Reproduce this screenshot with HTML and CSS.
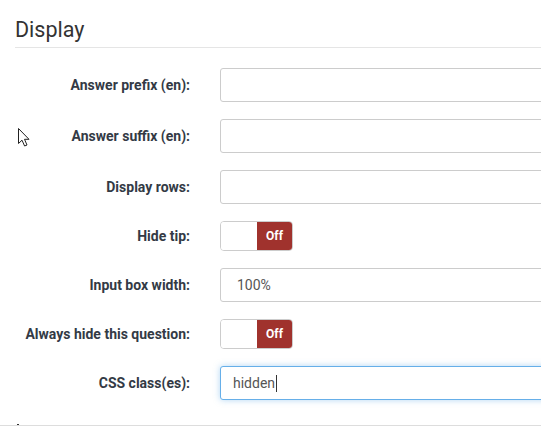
FILE: index.html
```html
<!DOCTYPE html>
<html>
<head>
<meta charset="utf-8">
<link rel="stylesheet" href="styles.css">
</head>
<body>
<div class="panel">
  <h3 class="section-title">Display</h3>
  <div class="form">
    <div class="row">
      <label class="label">Answer prefix (en):</label>
      <div class="field"><input class="input" type="text" value=""></div>
    </div>
    <div class="row">
      <label class="label">Answer suffix (en):</label>
      <div class="field"><input class="input" type="text" value=""></div>
    </div>
    <div class="row">
      <label class="label">Display rows:</label>
      <div class="field"><input class="input" type="text" value=""></div>
    </div>
    <div class="row row-toggle">
      <label class="label">Hide tip:</label>
      <div class="field"><div class="toggle"><span class="toggle-on"></span><span class="toggle-off">Off</span></div></div>
    </div>
    <div class="row">
      <label class="label">Input box width:</label>
      <div class="field"><div class="input input-wide"><span class="value">100%</span></div></div>
    </div>
    <div class="row row-toggle">
      <label class="label">Always hide this question:</label>
      <div class="field"><div class="toggle"><span class="toggle-on"></span><span class="toggle-off">Off</span></div></div>
    </div>
    <div class="row">
      <label class="label">CSS class(es):</label>
      <div class="field"><div class="input focused"><span class="value">hidden</span><span class="caret"></span></div></div>
    </div>
  </div>
  <div class="next-section"><span class="mark"></span></div>
</div>
<svg class="pointer" width="14" height="22" viewBox="0 0 14 22">
  <path d="M1.5 1.5 L1.5 16.5 L5 13.2 L7.6 19 L10 18 L7.5 12.3 L12 12.3 Z" fill="#fff" stroke="#222" stroke-width="1" stroke-linejoin="round"/>
</svg>
</body>
</html>
```
FILE: styles.css
```css
html, body {
  margin: 0;
  padding: 0;
  background: #fff;
  overflow: hidden;
}
body {
  width: 541px;
  height: 426px;
  font-family: Roboto, "Liberation Sans", sans-serif;
  color: #333;
  position: relative;
}
.panel {
  padding-left: 15px;
  margin-right: -30px;
}
.section-title {
  margin: 0;
  padding-top: 18px;
  padding-bottom: 5px;
  font-size: 21.5px;
  font-weight: 400;
  line-height: 24px;
  color: #333;
  border-bottom: 1px solid #e5e5e5;
}
.form {
  padding-top: 20px;
  display: flex;
  flex-direction: column;
  gap: 17px;
}
.row {
  display: grid;
  grid-template-columns: 175px 1fr;
  column-gap: 30px;
  align-items: center;
}
.label {
  text-align: right;
  font-weight: 700;
  font-size: 14px;
  color: #333a45;
}
.field {
  display: flex;
}
.input {
  box-sizing: border-box;
  width: 100%;
  height: 34px;
  border: 1px solid #ccc;
  border-radius: 3px;
  background: #fff;
  padding: 0 12px;
  font-family: Roboto, "Liberation Sans", sans-serif;
  font-size: 14px;
  color: #555;
  display: flex;
  align-items: center;
  outline: none;
}
.input-wide {
  padding-left: 16px;
}
.focused {
  border-color: #66afe9;
  box-shadow: 0 0 6px rgba(102, 175, 233, 0.5);
}
.caret {
  display: inline-block;
  width: 1px;
  height: 17px;
  background: #333;
  margin-left: 1px;
}
.toggle {
  box-sizing: border-box;
  width: 73px;
  height: 30px;
  border: 1px solid #ccc;
  border-radius: 4px;
  display: flex;
  overflow: hidden;
}
.toggle-on {
  width: 36px;
  background: #fff;
}
.toggle-off {
  flex: 1;
  background: #a0322d;
  color: #fff;
  font-size: 12px;
  font-weight: 700;
  display: flex;
  align-items: center;
  justify-content: center;
}
.next-section {
  margin-top: 25px;
  margin-left: -15px;
  border-bottom: 2px solid #ddd;
  height: 0;
  position: relative;
}
.mark {
  position: absolute;
  left: 17px;
  top: -1px;
  width: 2px;
  height: 1px;
  background: #333;
}
.pointer {
  position: absolute;
  left: 17px;
  top: 127px;
}
```
